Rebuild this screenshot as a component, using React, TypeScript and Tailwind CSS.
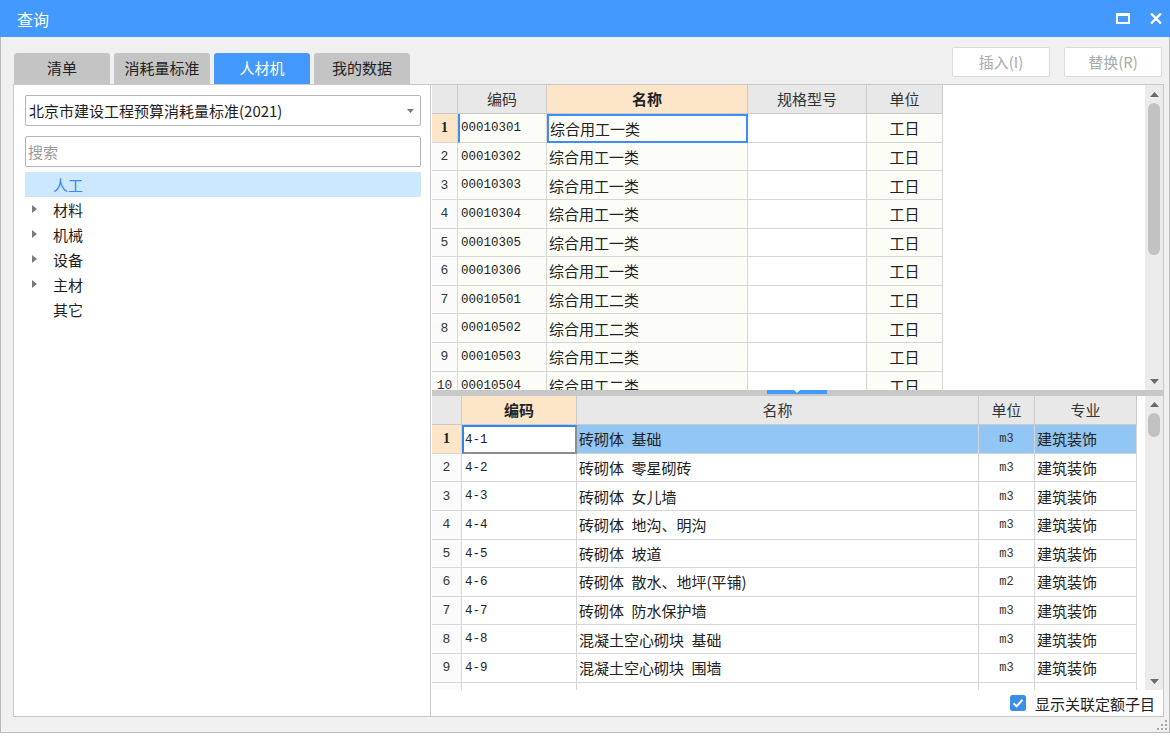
import React from "react";

const topRows: [string, string][] = [
  ["00010301", "综合用工一类"],
  ["00010302", "综合用工一类"],
  ["00010303", "综合用工一类"],
  ["00010304", "综合用工一类"],
  ["00010305", "综合用工一类"],
  ["00010306", "综合用工一类"],
  ["00010501", "综合用工二类"],
  ["00010502", "综合用工二类"],
  ["00010503", "综合用工二类"],
  ["00010504", "综合用工二类"],
];

const bottomRows: [string, string, string][] = [
  ["4-1", "砖砌体\u2002基础", "m3"],
  ["4-2", "砖砌体\u2002零星砌砖", "m3"],
  ["4-3", "砖砌体\u2002女儿墙", "m3"],
  ["4-4", "砖砌体\u2002地沟、明沟", "m3"],
  ["4-5", "砖砌体\u2002坡道", "m3"],
  ["4-6", "砖砌体\u2002散水、地坪(平铺)", "m2"],
  ["4-7", "砖砌体\u2002防水保护墙", "m3"],
  ["4-8", "混凝土空心砌块\u2002基础", "m3"],
  ["4-9", "混凝土空心砌块\u2002围墙", "m3"],
  ["", "", ""],
];

const tree = [
  { label: "人工", arrow: false, sel: true },
  { label: "材料", arrow: true, sel: false },
  { label: "机械", arrow: true, sel: false },
  { label: "设备", arrow: true, sel: false },
  { label: "主材", arrow: true, sel: false },
  { label: "其它", arrow: false, sel: false },
];

function ArrowUp() {
  return (
    <svg width="9" height="5" viewBox="0 0 9 5">
      <path d="M0 5 L4.5 0 L9 5Z" fill="#6a6a6a" />
    </svg>
  );
}
function ArrowDown() {
  return (
    <svg width="9" height="5" viewBox="0 0 9 5">
      <path d="M0 0 L4.5 5 L9 0Z" fill="#6a6a6a" />
    </svg>
  );
}

function TopScroll() {
  return (
    <div className="w-[18px] h-full bg-[#ebebeb] flex flex-col items-center">
      <div className="h-[18px] w-full flex items-center justify-center">
        <ArrowUp />
      </div>
      <div className="h-[152px] w-[12px] rounded-full bg-[#c2c2c2]" />
      <div className="flex-1" />
      <div className="h-[18px] w-full flex items-center justify-center">
        <ArrowDown />
      </div>
    </div>
  );
}

function BottomScroll() {
  return (
    <div className="w-[18px] h-full bg-[#ebebeb] flex flex-col items-center">
      <div className="h-[17px] w-full flex items-center justify-center">
        <ArrowUp />
      </div>
      <div className="h-[24px] w-[12px] rounded-full bg-[#c2c2c2]" />
      <div className="flex-1" />
      <div className="h-[18px] w-full flex items-center justify-center">
        <ArrowDown />
      </div>
    </div>
  );
}

export default function App() {
  return (
    <div className="w-[1170px] h-[737px] bg-white relative font-['Noto_Sans_CJK_SC',sans-serif] text-[#222]">
      <div className="flex flex-col h-[733px]">
        {/* Title bar */}
        <div className="h-[37px] bg-[#4499fe] flex items-center pl-[17px] pr-[7px] shrink-0">
          <span className="text-white text-[16px] leading-none">查询</span>
          <div className="flex-1" />
          <svg width="14" height="11" viewBox="0 0 14 11" className="mr-[20px]">
            <rect x="1" y="1.5" width="12" height="8.5" fill="none" stroke="#fff" strokeWidth="2" />
            <rect x="0" y="0" width="14" height="3" fill="#fff" />
          </svg>
          <svg width="12" height="11" viewBox="0 0 12 11" className="mr-[1px]">
            <path d="M1 0.5 L11 10.5 M11 0.5 L1 10.5" stroke="#fff" strokeWidth="2.4" />
          </svg>
        </div>

        {/* Body */}
        <div className="flex-1 bg-[#f0f0f0] border-l border-r border-b border-[#b9b9b9] pl-[12px] pr-[5px] flex flex-col">
          {/* Tabs & buttons */}
          <div className="h-[47px] flex shrink-0">
            <div className="flex items-end gap-[4px] pl-[1px]">
              <div className="w-[96px] h-[31px] rounded-t-[3px] bg-[#c4c4c4] flex items-center justify-center pb-[3px] text-[15px] leading-none">清单</div>
              <div className="w-[96px] h-[31px] rounded-t-[3px] bg-[#c4c4c4] flex items-center justify-center pb-[3px] text-[15px] leading-none">消耗量标准</div>
              <div className="w-[96px] h-[31px] rounded-t-[3px] bg-[#4499fe] text-white flex items-center justify-center pb-[3px] text-[15px] leading-none">人材机</div>
              <div className="w-[96px] h-[31px] rounded-t-[3px] bg-[#c4c4c4] flex items-center justify-center pb-[3px] text-[15px] leading-none">我的数据</div>
            </div>
            <div className="flex-1" />
            <div className="flex gap-[14px] pt-[10px] pr-[2px]">
              <div className="w-[98px] h-[30px] bg-white border border-[#dadada] rounded-[2px] flex items-center justify-center pb-[1px] text-[15px] leading-none text-[#a9a9a9]">插入(I)</div>
              <div className="w-[98px] h-[30px] bg-white border border-[#dadada] rounded-[2px] flex items-center justify-center pb-[1px] text-[15px] leading-none text-[#a9a9a9]">替换(R)</div>
            </div>
          </div>

          {/* Panels */}
          <div className="h-[633px] flex shrink-0">
            {/* Left panel */}
            <div className="w-[418px] h-full bg-white border border-[#c8c8c8] pl-[11px] pt-[10px]">
              <div className="w-[396px] h-[31px] border border-[#b4b4b4] rounded-[2px] flex items-center pl-[3px] pr-[6px]">
                <span className="text-[15px] leading-none text-[#1e1e1e]">北京市建设工程预算消耗量标准(2021)</span>
                <div className="flex-1" />
                <svg width="7" height="4" viewBox="0 0 7 4">
                  <path d="M0 0 L3.5 4 L7 0Z" fill="#777" />
                </svg>
              </div>
              <div className="w-[396px] h-[31px] mt-[10px] border border-[#b4b4b4] rounded-[2px] flex items-center pl-[2px]">
                <span className="text-[15px] leading-none text-[#9a9a9a]">搜索</span>
              </div>
              <div className="mt-[5px] w-[396px]">
                {tree.map((t) => (
                  <div
                    key={t.label}
                    className={
                      t.sel
                        ? "h-[25px] flex items-center pb-[1px] bg-[#cce8ff]"
                        : "h-[25px] flex items-center pb-[1px]"
                    }
                  >
                    <div className="w-[28px] flex justify-center pr-[10px]">
                      {t.arrow ? (
                        <svg width="5" height="8" viewBox="0 0 5 8">
                          <path d="M0 0 L5 4 L0 8Z" fill="#7a7a7a" />
                        </svg>
                      ) : null}
                    </div>
                    <span className={t.sel ? "text-[15px] leading-none text-[#3a8ae6]" : "text-[15px] leading-none text-[#1e1e1e]"}>
                      {t.label}
                    </span>
                  </div>
                ))}
              </div>
            </div>

            {/* Right panel */}
            <div className="w-[733px] h-full border-t border-r border-b border-[#c8c8c8] bg-white flex flex-col pl-[1px]">
              {/* Top grid */}
              <div className="h-[305px] flex shrink-0">
                <div className="flex-1 overflow-hidden bg-white">
                  <div className="flex h-[29px]">
                    <div className="w-[26px] bg-[#e8e8e8] border-r border-b border-[#c9c9c9]" />
                    <div className="w-[89px] bg-[#e8e8e8] border-r border-b border-[#c9c9c9] flex items-center justify-center pb-[1px] text-[15px] leading-none text-[#333]">编码</div>
                    <div className="w-[201px] bg-[#fde5c8] border-r border-b border-[#c9c9c9] flex items-center justify-center pb-[1px] text-[15px] leading-none font-bold text-[#222]">名称</div>
                    <div className="w-[119px] bg-[#e8e8e8] border-r border-b border-[#c9c9c9] flex items-center justify-center pb-[1px] text-[15px] leading-none text-[#333]">规格型号</div>
                    <div className="w-[76px] bg-[#e8e8e8] border-r border-b border-[#c9c9c9] flex items-center justify-center pb-[1px] text-[15px] leading-none text-[#333]">单位</div>
                  </div>
                  {topRows.map(([code, name], i) => (
                    <div key={code} className="flex h-[28.63px]">
                      <div
                        className={
                          i === 0
                            ? "w-[26px] shrink-0 bg-[#fde5c8] border-r border-b border-[#d6d6d6] flex items-center justify-center font-['Liberation_Serif',serif] font-bold text-[14px] leading-none"
                            : "w-[26px] shrink-0 bg-[#fbfbfb] border-r border-b border-[#d6d6d6] flex items-center justify-center font-['Liberation_Mono',monospace] text-[13px] leading-none text-[#333]"
                        }
                      >
                        {i + 1}
                      </div>
                      <div
                        className={
                          i === 0
                            ? "w-[89px] shrink-0 bg-[#fdfdf8] border-l-2 border-l-[#3d8df5] border-r border-b border-r-[#d6d6d6] border-b-[#d6d6d6] flex items-center pl-[1px] pt-[1px] font-['Liberation_Mono',monospace] text-[12.5px] leading-none"
                            : "w-[89px] shrink-0 bg-[#fdfdf8] border-r border-b border-[#d6d6d6] flex items-center pl-[3px] pt-[1px] font-['Liberation_Mono',monospace] text-[12.5px] leading-none"
                        }
                      >
                        {code}
                      </div>
                      <div
                        className={
                          i === 0
                            ? "w-[201px] shrink-0 bg-[#fdfdf8] border-2 border-[#3d8df5] flex items-center pl-[1px] text-[15px] leading-none"
                            : "w-[201px] shrink-0 bg-[#fdfdf8] border-r border-b border-[#d6d6d6] flex items-center pl-[2px] text-[15px] leading-none"
                        }
                      >
                        {name}
                      </div>
                      <div className="w-[119px] shrink-0 bg-white border-r border-b border-[#d6d6d6]" />
                      <div className="w-[76px] shrink-0 bg-[#fdfdf8] border-r border-b border-[#d6d6d6] flex items-center justify-center text-[15px] leading-none">工日</div>
                    </div>
                  ))}
                </div>
                <TopScroll />
              </div>

              {/* Splitter */}
              <div className="h-[6px] bg-[#c8c8c8] flex justify-center shrink-0 pr-[4px]">
                <div className="w-[60px] h-[4px] bg-[#4499fe] flex justify-center items-start ml-[2px]">
                  <svg width="6" height="3" viewBox="0 0 6 3">
                    <path d="M0 0 L3 3 L6 0Z" fill="#fff" />
                  </svg>
                </div>
              </div>

              {/* Bottom grid */}
              <div className="h-[294px] flex shrink-0">
                <div className="flex-1 overflow-hidden bg-white">
                  <div className="flex h-[29px]">
                    <div className="w-[30px] bg-[#e8e8e8] border-r border-b border-[#c9c9c9]" />
                    <div className="w-[115px] bg-[#fde5c8] border-r border-b border-[#c9c9c9] flex items-center justify-center pb-[1px] text-[15px] leading-none font-bold text-[#222]">编码</div>
                    <div className="w-[402px] bg-[#e8e8e8] border-r border-b border-[#c9c9c9] flex items-center justify-center pb-[1px] text-[15px] leading-none text-[#333]">名称</div>
                    <div className="w-[56px] bg-[#e8e8e8] border-r border-b border-[#c9c9c9] flex items-center justify-center pb-[1px] text-[15px] leading-none text-[#333]">单位</div>
                    <div className="w-[102px] bg-[#e8e8e8] border-r border-b border-[#c9c9c9] flex items-center justify-center pb-[1px] text-[15px] leading-none text-[#333]">专业</div>
                  </div>
                  {bottomRows.map(([code, name, unit], i) => (
                    <div key={i} className="flex h-[28.63px]">
                      <div
                        className={
                          i === 0
                            ? "w-[30px] shrink-0 bg-[#fde5c8] border-r border-b border-[#d6d6d6] flex items-center justify-center font-['Liberation_Serif',serif] font-bold text-[14px] leading-none"
                            : "w-[30px] shrink-0 bg-[#fbfbfb] border-r border-b border-[#d6d6d6] flex items-center justify-center font-['Liberation_Mono',monospace] text-[13px] leading-none text-[#333]"
                        }
                      >
                        {code ? i + 1 : ""}
                      </div>
                      <div
                        className={
                          i === 0
                            ? "w-[115px] shrink-0 bg-white border-t-2 border-l-2 border-t-[#2f86f0] border-l-[#2f86f0] border-r-2 border-b-2 border-r-[#8f8f8f] border-b-[#8f8f8f] flex items-center pl-[1px] pt-[1px] font-['Liberation_Mono',monospace] text-[12.5px] leading-none"
                            : "w-[115px] shrink-0 bg-white border-r border-b border-[#d6d6d6] flex items-center pl-[3px] pt-[1px] font-['Liberation_Mono',monospace] text-[12.5px] leading-none"
                        }
                      >
                        {code}
                      </div>
                      <div
                        className={
                          i === 0
                            ? "w-[402px] shrink-0 bg-[#92c6f4] border-r border-b border-[#d6d6d6] flex items-center pl-[2px] text-[15px] leading-none whitespace-pre"
                            : "w-[402px] shrink-0 bg-white border-r border-b border-[#d6d6d6] flex items-center pl-[2px] text-[15px] leading-none whitespace-pre"
                        }
                      >
                        {name}
                      </div>
                      <div
                        className={
                          i === 0
                            ? "w-[56px] shrink-0 bg-[#92c6f4] border-r border-b border-[#d6d6d6] flex items-center justify-center pt-[1px] font-['Liberation_Mono',monospace] text-[12px] leading-none text-[#333]"
                            : "w-[56px] shrink-0 bg-white border-r border-b border-[#d6d6d6] flex items-center justify-center pt-[1px] font-['Liberation_Mono',monospace] text-[12px] leading-none text-[#333]"
                        }
                      >
                        {unit}
                      </div>
                      <div
                        className={
                          i === 0
                            ? "w-[102px] shrink-0 bg-[#92c6f4] border-r border-b border-[#d6d6d6] flex items-center pl-[2px] text-[15px] leading-none"
                            : "w-[102px] shrink-0 bg-white border-r border-b border-[#d6d6d6] flex items-center pl-[2px] text-[15px] leading-none"
                        }
                      >
                        {code ? "建筑装饰" : ""}
                      </div>
                    </div>
                  ))}
                </div>
                <BottomScroll />
              </div>

              {/* Checkbox row */}
              <div className="flex-1 flex items-center justify-end pr-[8px]">
                <svg width="16" height="16" viewBox="0 0 16 16" className="mr-[9px]">
                  <rect x="0" y="0" width="16" height="16" rx="2.5" fill="#3a8ee8" />
                  <path d="M3.5 8.2 L6.6 11.2 L12.5 4.8" fill="none" stroke="#fff" strokeWidth="2" />
                </svg>
                <span className="text-[15px] leading-none text-[#222]">显示关联定额子目</span>
              </div>
            </div>
          </div>
        </div>
      </div>

      {/* resize grip */}
      <svg width="10" height="10" viewBox="0 0 10 10" className="absolute right-[3px] bottom-[7px]">
        <rect x="8" y="0" width="2" height="2" fill="#a8a8a8" />
        <rect x="4" y="4" width="2" height="2" fill="#a8a8a8" />
        <rect x="8" y="4" width="2" height="2" fill="#a8a8a8" />
        <rect x="0" y="8" width="2" height="2" fill="#a8a8a8" />
        <rect x="4" y="8" width="2" height="2" fill="#a8a8a8" />
        <rect x="8" y="8" width="2" height="2" fill="#a8a8a8" />
      </svg>
    </div>
  );
}
